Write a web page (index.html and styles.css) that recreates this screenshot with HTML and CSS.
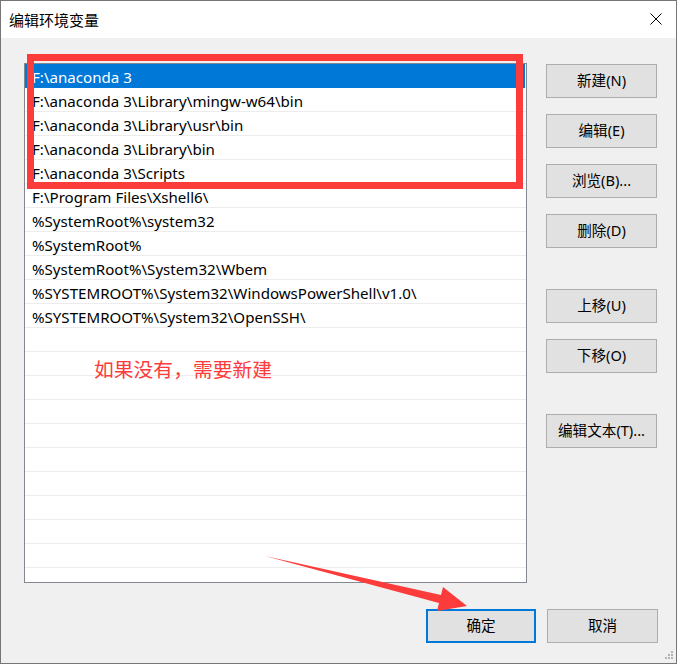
FILE: index.html
```html
<!DOCTYPE html>
<html lang="zh-CN">
<head>
<meta charset="utf-8">
<title>编辑环境变量</title>
<link rel="stylesheet" href="styles.css">
</head>
<body>
<div class="window">
  <div class="titlebar">
    <span class="title">编辑环境变量</span>
    <svg class="close" width="12" height="12" viewBox="0 0 12 12"><path d="M0.5 0.5 L11.5 11.5 M11.5 0.5 L0.5 11.5" stroke="#000" stroke-width="1" fill="none"/></svg>
  </div>
  <div class="content">
    <div class="main">
      <div class="listbox">
        <div class="row selected">F:\anaconda 3</div>
        <div class="row">F:\anaconda 3\Library\mingw-w64\bin</div>
        <div class="row">F:\anaconda 3\Library\usr\bin</div>
        <div class="row">F:\anaconda 3\Library\bin</div>
        <div class="row">F:\anaconda 3\Scripts</div>
        <div class="row">F:\Program Files\Xshell6\</div>
        <div class="row">%SystemRoot%\system32</div>
        <div class="row">%SystemRoot%</div>
        <div class="row">%SystemRoot%\System32\Wbem</div>
        <div class="row">%SYSTEMROOT%\System32\WindowsPowerShell\v1.0\</div>
        <div class="row">%SYSTEMROOT%\System32\OpenSSH\</div>
        <div class="row"></div>
        <div class="row"></div>
        <div class="row"></div>
        <div class="row"></div>
        <div class="row"></div>
        <div class="row"></div>
        <div class="row"></div>
        <div class="row"></div>
        <div class="row"></div>
        <div class="row"></div>
        <div class="row"></div>
      </div>
      <div class="side">
        <button class="btn">新建(N)</button>
        <button class="btn">编辑(E)</button>
        <button class="btn">浏览(B)...</button>
        <button class="btn">删除(D)</button>
        <button class="btn group">上移(U)</button>
        <button class="btn">下移(O)</button>
        <button class="btn group">编辑文本(T)...</button>
      </div>
    </div>
    <div class="footer">
      <button class="btn default">确定</button>
      <button class="btn">取消</button>
    </div>
  </div>

  <div class="mark-box"></div>
  <div class="mark-text">如果没有，需要新建</div>
  <svg class="mark-arrow" width="677" height="664" viewBox="0 0 677 664">
    <polygon points="265,556 441,595 443,587 467,606 437,611 439,603" fill="#fc3b3b"/>
  </svg>
  <svg class="grip" width="10" height="10" viewBox="0 0 10 10">
    <rect x="7" y="0" width="2" height="2" fill="#b4b4b4"/>
    <rect x="4" y="3" width="2" height="2" fill="#b4b4b4"/>
    <rect x="7" y="3" width="2" height="2" fill="#b4b4b4"/>
    <rect x="1" y="6" width="2" height="2" fill="#b4b4b4"/>
    <rect x="4" y="6" width="2" height="2" fill="#b4b4b4"/>
    <rect x="7" y="6" width="2" height="2" fill="#b4b4b4"/>
  </svg>
</div>
</body>
</html>
```
FILE: styles.css
```css
html, body {
  margin: 0;
  padding: 0;
  background: #f0f0f0;
}

.window {
  position: relative;
  width: 677px;
  height: 664px;
  box-sizing: border-box;
  border: 1px solid #767676;
  background: #f0f0f0;
  font-family: "Noto Sans", "Noto Sans CJK SC", sans-serif;
  font-size: 15px;
  color: #000;
  overflow: hidden;
}

.titlebar {
  height: 37px;
  background: #fff;
  display: flex;
  align-items: center;
  justify-content: space-between;
  padding: 0 14px 0 8px;
}

.title {
  font-family: "Noto Sans CJK SC", sans-serif;
  font-size: 15px;
  line-height: 1;
}

.close {
  display: block;
  margin-top: -1px;
}

.content {
  padding: 25px 18px 0 23px;
}

.main {
  display: flex;
  gap: 19px;
}

.listbox {
  width: 503px;
  height: 520px;
  box-sizing: border-box;
  border: 1px solid #828790;
  background: #fff;
  overflow: hidden;
}

.row {
  height: 24px;
  box-sizing: border-box;
  border-bottom: 1px solid #ececec;
  padding: 2px 0 0 7px;
  line-height: 22px;
  white-space: nowrap;
  font-size: 15.1px;
}

.row.selected {
  background: #0078d7;
  color: #fff;
  border-bottom-color: #0078d7;
  margin-right: 1px;
}

.side {
  display: flex;
  flex-direction: column;
  gap: 16px;
  padding-top: 1px;
}

.btn {
  width: 111px;
  height: 34px;
  box-sizing: border-box;
  background: #e1e1e1;
  border: 1px solid #adadad;
  padding: 0 0 2px 0;
  display: flex;
  align-items: center;
  justify-content: center;
  line-height: 1;
  font-family: "Noto Sans", "Noto Sans CJK SC", sans-serif;
  font-size: 14.6px;
  color: #000;
}

.btn.group {
  margin-top: 25px;
}

.btn.default {
  border: 2px solid #0078d7;
  width: 110px;
}

.footer {
  display: flex;
  justify-content: flex-end;
  gap: 11px;
  padding-top: 26px;
}

.mark-box {
  position: absolute;
  left: 26px;
  top: 53px;
  width: 496px;
  height: 135px;
  box-sizing: border-box;
  border: 7px solid #fc3b3b;
}

.mark-text {
  position: absolute;
  left: 93px;
  top: 355px;
  font-family: "Noto Sans CJK SC", sans-serif;
  font-size: 19.8px;
  line-height: 26px;
  color: #fc3b3b;
}

.mark-arrow {
  position: absolute;
  left: -1px;
  top: -1px;
  pointer-events: none;
}

.grip {
  position: absolute;
  right: 2px;
  bottom: 2px;
}
```
